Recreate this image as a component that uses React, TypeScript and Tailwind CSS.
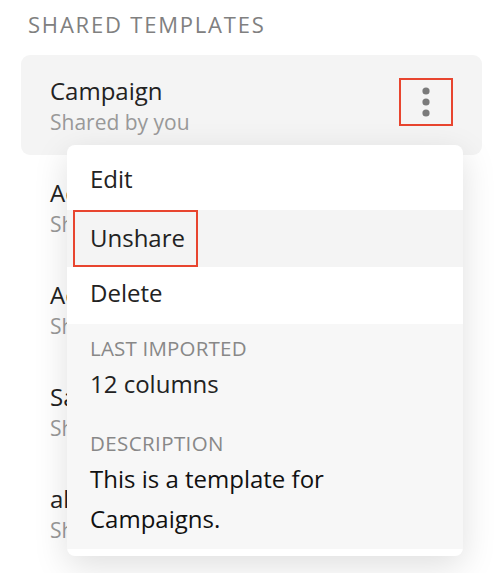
import { useState } from 'react';

const templates = [
  { name: 'Campaign', by: 'Shared by you' },
  { name: 'Accounts', by: 'Shared by you' },
  { name: 'Activities', by: 'Shared by you' },
  { name: 'Sales', by: 'Shared by you' },
  { name: 'all leads', by: 'Shared by you' },
];

const font = { fontFamily: '"Open Sans", Lato, sans-serif' };

function KebabButton() {
  return (
    <button
      type="button"
      className="-mt-[6px] flex h-[48px] w-[54px] items-center justify-center border-2 border-[#e8452f]"
    >
      <svg width="8" height="30" viewBox="0 0 8 30">
        <circle cx="4" cy="4" r="3.6" fill="#7a7a7a" />
        <circle cx="4" cy="15" r="3.6" fill="#7a7a7a" />
        <circle cx="4" cy="26" r="3.6" fill="#7a7a7a" />
      </svg>
    </button>
  );
}

function ActionsMenu() {
  const [active] = useState('Unshare');
  const items = ['Edit', 'Unshare', 'Delete'];

  return (
    <div className="absolute left-[67px] top-[145px] w-[396px] overflow-hidden rounded-[8px] bg-white pb-[7px] shadow-[0_10px_34px_rgba(0,0,0,0.13)]">
      <div className="pt-[8px]">
        {items.map((item) => (
          <div
            key={item}
            className={`h-[57px] text-[24px] leading-[52px] text-[#222] ${item === active ? 'bg-[#f4f4f4] pl-[6px]' : 'pl-[23px]'}`}
          >
            {item === active ? (
              <span className="block h-[57px] w-[125px] border-2 border-[#e8452f] pl-[15px]">{item}</span>
            ) : (
              item
            )}
          </div>
        ))}
      </div>
      <div className="bg-[#f7f7f7] px-[23px] pb-[10px] pt-[12px]">
        <div className="text-[20.5px] uppercase leading-[24px] tracking-[0.2px] text-[#888]">Last imported</div>
        <div className="mt-[9px] text-[24px] leading-[30px] text-[#222]">12 columns</div>
        <div className="mt-[32px] text-[20.5px] uppercase leading-[24px] tracking-[0.4px] text-[#888]">Description</div>
        <div className="mt-[4px] text-[24px] leading-[40px] text-[#111]">
          This is a template for
          <br />
          Campaigns.
        </div>
      </div>
    </div>
  );
}

export default function App() {
  return (
    <div className="relative h-[573px] w-[503px] overflow-hidden bg-white" style={font}>
      <h2 className="pl-[28px] pt-[11px] text-[22px] leading-[26px] tracking-[1.8px] text-[#808080]">
        SHARED TEMPLATES
      </h2>

      <div className="mt-[18px] flex flex-col gap-[2px] px-[21px]">
        {templates.map((t, i) => (
          <div
            key={t.name}
            className={`flex h-[100px] items-center justify-between rounded-[9px] pl-[29px] pr-[29px] ${i === 0 ? 'bg-[#f4f4f4]' : ''}`}
          >
            <div className="flex flex-col">
              <span className="text-[24px] leading-[30px] text-[#222]">{t.name}</span>
              <span className="mt-[3px] text-[21px] leading-[26px] text-[#999]">{t.by}</span>
            </div>
            {i === 0 ? <KebabButton /> : null}
          </div>
        ))}
      </div>

      <ActionsMenu />
    </div>
  );
}
